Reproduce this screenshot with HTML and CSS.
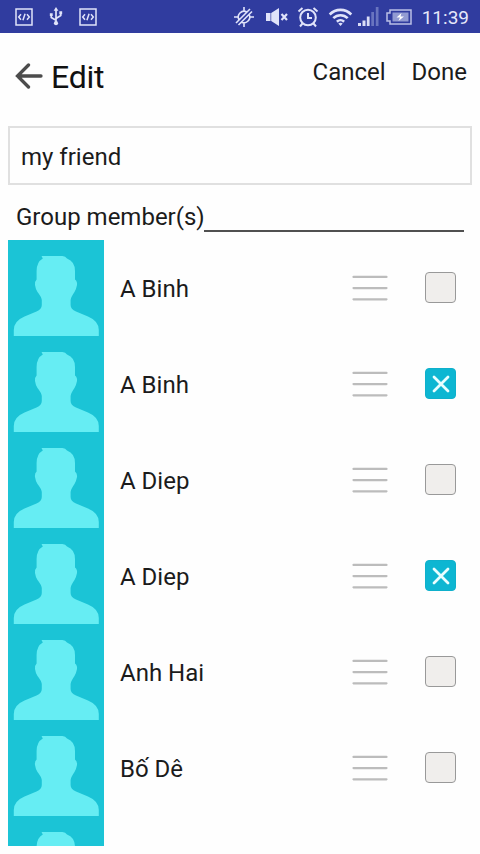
FILE: index.html
```html
<!DOCTYPE html>
<html lang="en">
<head>
<meta charset="utf-8">
<title>Edit group</title>
<link rel="stylesheet" href="styles.css">
</head>
<body>
<svg class="defs" width="0" height="0">
  <symbol id="person" viewBox="0 0 96 96">
    <path d="M33.500 16H54.500Q57.500 16.300 59 18.500Q67 21.500 67 31V39.500Q69.500 41.500 69 45Q68 50 66.500 52Q63 57 62.600 60V65Q62.600 69 68 71.500L80 76.500Q90.800 81 90.800 90V96H5.800V90Q5.800 81 16.500 76.500L28.500 71.500Q33.800 69 33.800 65V60Q33.500 57 29.500 52Q27.800 50 27 45Q26.500 41.500 28.600 39.500V31Q28.600 22 34.800 18.500Z"/>
  </symbol>
  <symbol id="grip" viewBox="0 0 36 26">
    <path d="M1.500 1.900h33M1.500 13.100h33M1.500 24.300h33"/>
  </symbol>
  <symbol id="code" viewBox="0 0 18 18">
    <path d="M1 1h16v16H1zM6 6.300L3.700 9 6 11.700M12 6.300L14.300 9 12 11.700M10.100 5.800L7.900 12.200"/>
  </symbol>
</svg>

<header class="status">
  <svg class="line code" viewBox="0 0 18 18"><use href="#code"/></svg>
  <svg class="line usb" viewBox="0 0 16 20"><path d="M8 3v14M8 14L3 11V8M8 12l5-3V6"/><path class="solid" d="M8 0l2.500 4h-5zM1.500 6.500h3v3h-3zM11.500 4.500h3v3h-3z"/><circle class="solid" cx="8" cy="17" r="2.200"/></svg>
  <svg class="line code" viewBox="0 0 18 18"><use href="#code"/></svg>
  <span class="spacer"></span>
  <svg class="line gps" viewBox="0 0 20 20"><path d="M10 0v4M10 16v4M0 10h4M16 10h4M4.800 12.500a5.800 5.800 0 0 1 7.700-7.700M15.200 7.500a5.800 5.800 0 0 1-7.700 7.700M2 16L16 2M4.500 18L18 4.500"/></svg>
  <svg class="line mute" viewBox="0 0 24 18"><path class="solid" d="M1 5h4.500v8H1zM6.200 5L14 0v18l-7.800-5z"/><path d="M16.500 6l5.500 6M22 6l-5.500 6"/></svg>
  <svg class="line alarm" viewBox="0 0 22 22"><circle cx="11" cy="11.500" r="7.800"/><path d="M11 7v5h4M1.500 5.500l4-3.500M20.500 5.500l-4-3.500M5.500 17.500L3 20.500M16.500 17.500l2.500 3"/></svg>
  <svg class="line wifi" viewBox="0 0 24 20"><path d="M1.200 7.500c6-6.200 15.600-6.200 21.600 0M4.800 11.200c4-4 10.400-4 14.400 0M8.400 14.700c2-1.900 5.200-1.900 7.200 0"/><path class="solid" d="M9.800 16.500q2.200-1.600 4.400 0L12 19z"/></svg>
  <svg class="signal" viewBox="0 0 21 19"><path d="M0 16h3v3H0zM4.500 13.500h3V19h-3z"/><path d="M8.800 9.500h2.800V19H8.800z"/><path class="dim" d="M13.300 5h2.700v14h-2.700zM17.800 0h2.700v19h-2.700z"/></svg>
  <svg class="battery" viewBox="0 0 26 16"><path class="shell" d="M4 1h21v14H4v-3H1V4h3z"/><path class="charge" d="M6.500 3.500h16v9h-16z"/><path class="bolt" d="M15.500 4l-5 4.500h3.500l-1.500 3.500 5.500-4.500h-3.500z"/></svg>
  <span class="clock">11:39</span>
</header>

<nav class="bar">
  <svg class="back" viewBox="0 0 28 26"><path d="M13.500 2L2.500 13l11 11M2.500 13H26"/></svg>
  <h1 class="title">Edit</h1>
  <span class="action">Cancel</span>
  <span class="action done">Done</span>
</nav>

<main class="content">
  <div class="field">my friend</div>
  <div class="section"><span>Group member(s)</span><span class="rule"></span></div>
  <ul class="list">
    <li class="row"><svg class="avatar"><use href="#person"/></svg><span class="name">A Binh</span><svg class="grip"><use href="#grip"/></svg><span class="check"></span></li>
    <li class="row"><svg class="avatar"><use href="#person"/></svg><span class="name">A Binh</span><svg class="grip"><use href="#grip"/></svg><span class="check on"><svg viewBox="0 0 18 18"><path d="M2 2l14 14M16 2L2 16"/></svg></span></li>
    <li class="row"><svg class="avatar"><use href="#person"/></svg><span class="name">A Diep</span><svg class="grip"><use href="#grip"/></svg><span class="check"></span></li>
    <li class="row"><svg class="avatar"><use href="#person"/></svg><span class="name">A Diep</span><svg class="grip"><use href="#grip"/></svg><span class="check on"><svg viewBox="0 0 18 18"><path d="M2 2l14 14M16 2L2 16"/></svg></span></li>
    <li class="row"><svg class="avatar"><use href="#person"/></svg><span class="name">Anh Hai</span><svg class="grip"><use href="#grip"/></svg><span class="check"></span></li>
    <li class="row"><svg class="avatar"><use href="#person"/></svg><span class="name">Bố Dê</span><svg class="grip"><use href="#grip"/></svg><span class="check"></span></li>
    <li class="row"><svg class="avatar"><use href="#person"/></svg></li>
  </ul>
</main>
</body>
</html>
```
FILE: styles.css
```css
* { box-sizing: border-box; }
body {
  margin: 0;
  height: 854px;
  overflow: hidden;
  display: flex;
  flex-direction: column;
  background: #fefefe;
  color: #1b1b1b;
  font-family: Roboto, sans-serif;
  font-size: 24px;
}
svg { display: block; flex: none; }
.defs { display: none; }

.status {
  flex: none;
  height: 33px;
  display: flex;
  align-items: center;
  padding: 0 11px 0 15px;
  background: #303c9f;
  color: #e6e8fa;
}
.line { fill: none; stroke: #e0e3fa; stroke-width: 1.8; }
.solid { fill: #e0e3fa; stroke: none; }
.code { width: 18px; height: 18px; stroke-width: 1.5; }
.usb { width: 16px; height: 19px; margin: 0 15px; }
.spacer { flex: 1; }
.gps { width: 20px; height: 20px; margin-right: 11px; stroke-width: 1.6; }
.mute { width: 24px; height: 18px; margin-right: 8px; stroke-width: 2.2; }
.alarm { width: 22px; height: 22px; margin-right: 9px; stroke-width: 2; }
.wifi { width: 25px; height: 20px; margin-right: 5px; stroke-width: 2.6; }
.signal { width: 21px; height: 19px; margin-right: 7px; fill: #d9dcf6; }
.dim { fill: #6974bf; }
.battery { width: 26px; height: 16px; margin-right: 10px; }
.shell { fill: none; stroke: #b9bfe6; stroke-width: 1.5; }
.charge { fill: #929bd2; }
.bolt { fill: #fff; }
.clock { font-size: 19px; line-height: 33px; position: relative; top: 1px; }

.bar {
  flex: none;
  height: 93px;
  display: flex;
  align-items: flex-start;
  padding: 0 13px 0 15px;
}
.back { width: 28px; height: 26px; margin: 30px 8px 0 0; fill: none; stroke: #4c4c4c; stroke-width: 3.3; stroke-linecap: round; }
.title { flex: 1; margin: 25px 0 0; font-size: 32px; font-weight: 400; line-height: 38px; letter-spacing: -0.2px; color: #111; }
.action { margin-top: 24px; line-height: 30px; }
.done { margin-left: 26px; }

.content {
  height: 720px;
  padding: 0 8px;
  overflow: hidden;
}
.field {
  height: 59px;
  padding: 1px 11px 0;
  border: 2px solid #e0e0e0;
  line-height: 57px;
}
.section {
  height: 55px;
  display: flex;
  padding: 0 8px;
  line-height: 64px;
}
.rule { flex: 1; height: 2px; margin: 45px 0 0 -1px; background: #505050; }
.list { margin: 0; padding: 0; list-style: none; height: 606px; overflow: hidden; }
.row { height: 96px; display: flex; align-items: center; padding-right: 16px; }
.avatar { width: 96px; height: 96px; background: #1bc4d6; fill: #66edf3; }
.name { flex: 1; margin-left: 16px; line-height: 34px; padding-top: 1px; }
.grip { width: 36px; height: 26px; margin-right: 37px; stroke: #bcbcbc; stroke-width: 2.2; stroke-linecap: round; }
.check {
  width: 31px;
  height: 31px;
  margin-top: -1px;
  border: 1.500px solid #999;
  border-radius: 4px;
  background: #f0eeec;
  display: grid;
  place-items: center;
}
.on { border-color: #0fb0cb; background: #0db6d2; }
.on svg { width: 18px; height: 18px; fill: none; stroke: #e9feff; stroke-width: 2.8; stroke-linecap: round; }
```
